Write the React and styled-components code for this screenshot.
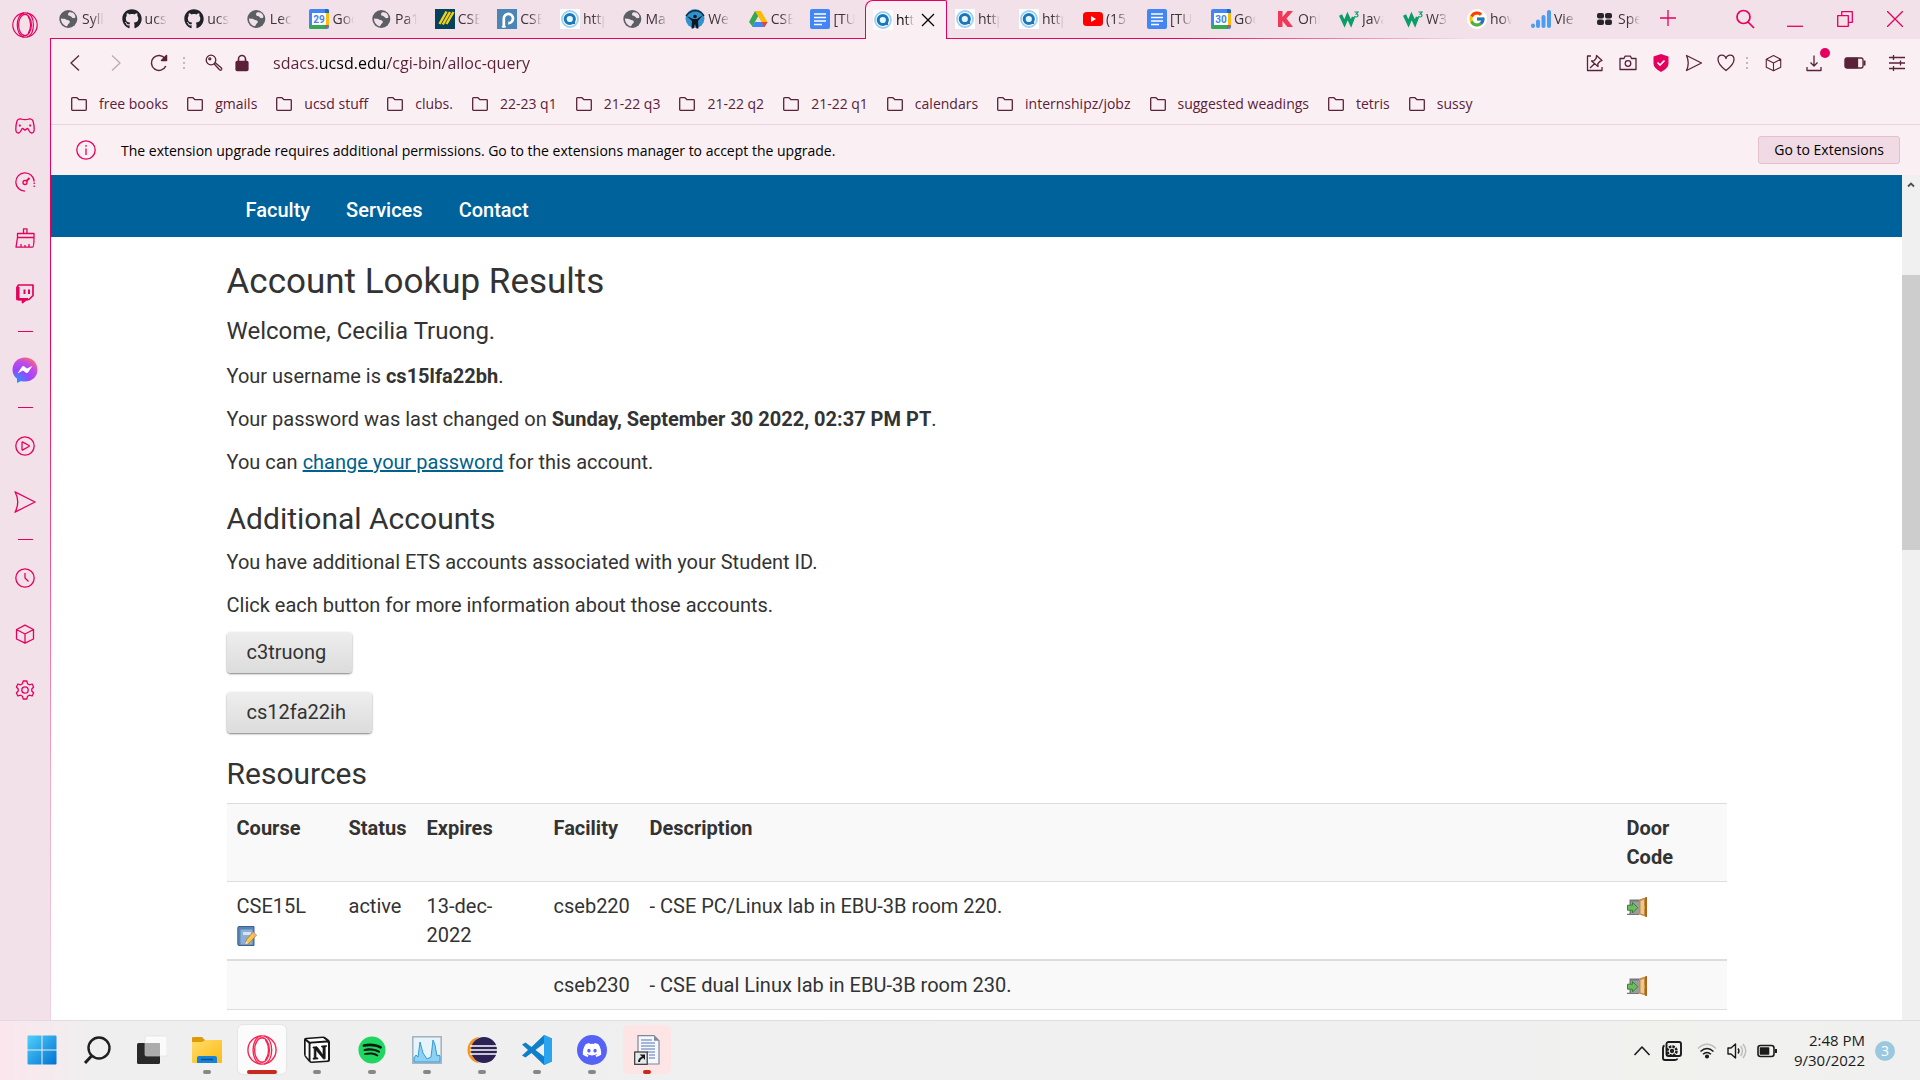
import React from "react";
import styled, { createGlobalStyle, css } from "styled-components";
import { FaGithub, FaDiscord, FaSpotify } from "react-icons/fa";
import { FcGoogle } from "react-icons/fc";

const pink = "#e6005e";
const plum = "#5a2139";
const uiFont = '"Open Sans", "Noto Sans", sans-serif';

const GlobalStyle = createGlobalStyle`
  *, *::before, *::after { box-sizing: border-box; }
  body { margin: 0; background: #fff; font-family: ${uiFont}; }
  svg { display: block; flex: none; }
  button, input { font: inherit; }
  button { border: 0; padding: 0; background: none; color: inherit; }
`;

/* ---------- frame ---------- */
const Desktop = styled.div`
  height: 100vh;
  display: flex;
  flex-direction: column;
  overflow: hidden;
`;
const Browser = styled.div`
  flex: 1;
  min-height: 0;
  display: flex;
  background: #f3e1e9;
`;
const Side = styled.aside`
  width: 50px;
  flex: none;
  display: flex;
  flex-direction: column;
  align-items: center;
  color: ${pink};
`;
const SideLogo = styled.button`
  height: 98px;
  width: 50px;
  padding-top: 12px;
  display: flex;
  justify-content: center;
  align-items: flex-start;
`;
const SideButton = styled.button`
  height: 56px;
  width: 48px;
  display: grid;
  place-items: center;
`;
const SideRule = styled.hr`
  width: 15px;
  height: 1px;
  border: 0;
  margin: 9px 0 10px;
  background: ${pink};
`;
const Column = styled.div`
  flex: 1;
  min-width: 0;
  display: flex;
  flex-direction: column;
`;

/* ---------- tabs ---------- */
const TabBar = styled.header`
  height: 39px;
  flex: none;
  display: flex;
  background: linear-gradient(to right, ${pink} 60%, rgba(230, 0, 94, 0) 76%) 0 100% / 100% 1px no-repeat, #f3e1e9;
`;
const TabList = styled.div`
  flex: 1;
  min-width: 0;
  display: grid;
  grid-template-columns: repeat(13, minmax(0, 1fr)) 82px repeat(11, 64px);
  padding: 0 1px;
`;
const Tab = styled.button`
  display: flex;
  align-items: center;
  gap: 3px;
  padding: 0 0 1px 8px;
  color: #3a3338;
  ${(p) =>
    p.$active &&
    css`
      background: #faf0f4;
      border: 1px solid ${pink};
      border-bottom: 0;
      border-radius: 8px 2px 0 0;
      color: #000;
      padding-left: 7px;
    `}
`;
const TabTitle = styled.span`
  flex: none;
  width: ${(p) => (p.$active ? 18 : 22)}px;
  margin-right: ${(p) => (p.$active ? 4 : 0)}px;
  overflow: hidden;
  white-space: nowrap;
  text-align: left;
  font-size: 14px;
  line-height: 20px;
  mask-image: linear-gradient(to right, #000 45%, transparent);
`;
const WindowTools = styled.div`
  width: 268px;
  flex: none;
  display: flex;
  color: ${pink};
`;
const NewTab = styled.button`
  width: 68px;
  height: 38px;
  padding: 0 0 2px 8px;
  display: flex;
  align-items: center;
`;
const WindowButton = styled.button`
  width: 50px;
  height: 38px;
  display: grid;
  place-items: center;
`;

/* ---------- toolbars ---------- */
const Chrome = styled.div`
  flex: 1;
  min-height: 0;
  display: flex;
  flex-direction: column;
  background: linear-gradient(to bottom, ${pink}, ${pink} 30%, #f0a8c6 75%, #efd3e0) 0 0 / 1px 100% no-repeat, #faf0f4;
  padding-left: 1px;
`;
const AddressBar = styled.div`
  height: 46px;
  flex: none;
  display: flex;
  align-items: center;
  padding: 2px 2px 0 9px;
  color: ${plum};
`;
const ToolButton = styled.button`
  width: ${(p) => p.$w || 33}px;
  height: 32px;
  flex: none;
  display: grid;
  place-items: center;
  opacity: ${(p) => (p.disabled ? 0.35 : 1)};
  position: relative;
  color: inherit;
`;
const Dot = styled.span`
  position: absolute;
  right: 4px;
  top: 1px;
  width: 10px;
  height: 10px;
  border-radius: 50%;
  background: ${pink};
`;
const Url = styled.input`
  flex: 1;
  min-width: 0;
  height: 32px;
  margin-left: 26px;
  border: 0;
  padding: 0;
  outline: 0;
  font-size: 16px;
  background: linear-gradient(to right, ${plum} 46px, #000 46px, #000 113px, ${plum} 113px);
  background-clip: text;
  -webkit-text-fill-color: transparent;
`;
const Bookmarks = styled.nav`
  height: 40px;
  flex: none;
  display: flex;
  align-items: center;
  gap: 19px;
  padding: 0 0 2px 20px;
  border-bottom: 1px solid #ecd2dd;
`;
const Bookmark = styled.a`
  display: flex;
  align-items: center;
  gap: 12px;
  font-size: 14px;
  line-height: 20px;
  color: ${plum};
  text-decoration: none;
  white-space: nowrap;
`;
const Notice = styled.div`
  height: 50px;
  flex: none;
  display: flex;
  align-items: center;
  padding: 0 20px 0 25px;
  font-size: 14px;
  color: #000;
`;
const NoticeText = styled.span`
  flex: 1;
  padding: 2px 0 0 25px;
  line-height: 20px;
`;
const NoticeButton = styled.button`
  height: 28px;
  padding: 0 15px 1px;
  background: #f0dae3;
  border: 1px solid #e3bfcf;
  border-radius: 3px;
`;

/* ---------- web page ---------- */
const Viewport = styled.div`
  flex: 1;
  min-height: 0;
  display: flex;
  background: #fff;
`;
const Page = styled.div`
  flex: 1;
  min-width: 0;
  overflow: hidden;
  background: #fff;
  color: #333;
  font-family: Roboto, sans-serif;
  font-size: 20px;
  line-height: 29px;
`;
const Container = styled.div`
  max-width: 1500px;
  margin: 0 auto;
`;
const SiteNav = styled.nav`
  background: #00629b;
`;
const NavLinks = styled(Container)`
  height: 62px;
  display: flex;
  align-items: center;
  gap: 36px;
  padding: 8px 19px 0;
`;
const NavLink = styled.a`
  color: #fff;
  font-weight: 500;
  text-decoration: none;
`;
const Title = styled.h1`
  margin: 0;
  padding-top: 23px;
  font-size: 35px;
  line-height: 44px;
  font-weight: 400;
`;
const Welcome = styled.h3`
  margin: 11px 0 15px;
  font-size: 24px;
  line-height: 32px;
  font-weight: 400;
`;
const Heading = styled.h2`
  margin: ${(p) => p.$top}px 0 11px;
  font-size: 30px;
  line-height: 36px;
  font-weight: 400;
`;
const Text = styled.p`
  margin: 0 0 ${(p) => (p.$tight ? 12 : 14)}px;
`;
const TextLink = styled.a`
  color: #00628a;
`;
const AccountButton = styled.button`
  display: block;
  height: 41px;
  margin-bottom: 19px;
  padding: 0 26px 0 20px;
  border-radius: 4px;
  background: linear-gradient(#eee, #dcdcdc);
  box-shadow: 0 1px 2px rgba(0, 0, 0, 0.5);
`;
const Table = styled.table`
  width: 100%;
  table-layout: fixed;
  border-collapse: collapse;
  border-bottom: 1px solid #ddd;
`;
const Col = styled.col`
  width: ${(p) => (p.$w ? `${p.$w}px` : "auto")};
`;
const Row = styled.tr`
  background: ${(p) => (p.$shade ? "#f9f9f9" : "#fff")};
  border-top: ${(p) => (p.$thick ? 2 : 1)}px solid #ddd;
`;
const Cell = styled.td`
  padding: 10px 10px 9px;
  vertical-align: top;
  text-align: left;
`;
const HeadCell = styled(Cell)`
  font-weight: 700;
`;
const IconLine = styled.a`
  height: 29px;
  display: flex;
  align-items: center;
`;
const Scrollbar = styled.div`
  width: 18px;
  flex: none;
  background: #f0f0f0;
  display: flex;
  flex-direction: column;
  align-items: center;
  padding-top: 5px;
`;
const Thumb = styled.div`
  width: 18px;
  height: 275px;
  margin-top: 85px;
  background: #cdcdcd;
`;

/* ---------- taskbar ---------- */
const Taskbar = styled.footer`
  height: 60px;
  flex: none;
  display: flex;
  justify-content: space-between;
  border-top: 1px solid #dedede;
  background: linear-gradient(to right, #fbe6ee, #f0efef 90px, #f0f0f0 1500px, #f1f1ee 1650px, #f0f0f0);
`;
const Apps = styled.div`
  display: flex;
  gap: 7px;
  padding: 4px 0 0 18px;
`;
const AppButton = styled.button`
  position: relative;
  width: 48px;
  height: 49px;
  display: grid;
  place-items: center;
  border-radius: 5px;
  background: ${(p) => (p.$tone === "open" ? "#fbfbfb" : p.$tone === "alert" ? "#fde5e6" : "none")};
  box-shadow: ${(p) => (p.$tone === "open" ? "0 0 1px 1px #e5e5e5" : "none")};
`;
const Running = styled.span`
  position: absolute;
  bottom: 0;
  left: 50%;
  transform: translateX(-50%);
  width: ${(p) => (p.$tone === "open" ? 30 : 8)}px;
  height: 4px;
  border-radius: 2px;
  background: ${(p) => (p.$tone ? "#c42b1c" : "#878787")};
`;
const Tray = styled.div`
  display: flex;
  align-items: center;
  padding-right: 25px;
  color: #1b1b1b;
`;
const TrayIcon = styled.button`
  width: ${(p) => p.$w || 30}px;
  display: grid;
  place-items: center;
`;
const Clock = styled.div`
  width: 83px;
  padding-bottom: 2px;
  text-align: right;
  font-size: 15px;
  line-height: 20px;
  white-space: nowrap;
`;
const Badge = styled.span`
  width: 20px;
  height: 20px;
  margin-left: 10px;
  border-radius: 50%;
  background: #99c8df;
  color: #fff;
  font-size: 14px;
  line-height: 20px;
  text-align: center;
`;

/* ---------- drawings ---------- */
const Line = ({ s = 20, w, h, sw = 1.3, vb, children }) => (
  <svg width={w || s} height={h || s} viewBox={vb || `0 0 ${w || s} ${h || s}`} fill="none" stroke="currentColor" strokeWidth={sw} strokeLinejoin="round" aria-hidden="true">
    {children}
  </svg>
);
const Opera = ({ w = 26, h = 26, c = "currentColor", sw = 1.2 }) => (
  <svg width={w} height={h} viewBox="0 0 26 26" fill="none" stroke={c} strokeWidth={sw}>
    <ellipse cx="13" cy="13" rx="12.2" ry="12.2" />
    <ellipse cx="13" cy="13" rx="6.4" ry="10.6" />
    <path d="M12 .8C3 3 3 23 12 25.200" />
    <path d="M15 .8C23.500 4 23.500 22 15 25.200" />
    <path d="M16 4.500C19.500 9 19.500 17 16 21.500" />
  </svg>
);
const CubePaths = () => <path d="M10 1.2L18.5 5.5V15L10 19.2L1.5 15V5.5zM1.5 5.5L10 10L18.5 5.5M10 10V19.2" />;
const Globe = () => (
  <svg width="20" height="20" viewBox="0 0 20 20">
    <circle cx="9.3" cy="10" r="9" fill="#5b5f63" />
    <path d="M10 3.500c2-.6 4.200 0 5.700 2.200.9 1.600 1 3-.2 3.300-1.600.5-2.500-.2-3.200-1.200-.8-1-2-.3-2.800-1.200-.7-.9-.5-2.700.5-3.100zM2 9.600c2 .2 3.200-.3 5 .8 1.800 1 3.200.6 3.800 2 .4 1.300-1.100 2-1.700 2.900-.5.900-.6 2-1.800 1.900C4.300 16.300 1.800 13 2 9.600z" fill="#f3e1e9" />
  </svg>
);
const Calendar = ({ n }) => (
  <svg width="20" height="20" viewBox="0 0 20 20">
    <rect width="20" height="20" rx="2" fill="#4285f4" />
    <path d="M16 4h4v12h-4z" fill="#fbbc04" />
    <path d="M0 16h16v4H2a2 2 0 0 1-2-2z" fill="#34a853" />
    <path d="M16 16h4l-4 4z" fill="#ea4335" />
    <path d="M16 0h2a2 2 0 0 1 2 2v2h-4z" fill="#1967d2" />
    <rect x="3" y="4" width="14" height="12" fill="#fff" />
    <text x="10" y="13.500" fontSize="10" fontWeight="700" fontFamily="Roboto, sans-serif" textAnchor="middle" fill="#4285f4">{n}</text>
  </svg>
);
const Stripes = () => (
  <svg width="20" height="20" viewBox="0 0 20 20">
    <rect width="20" height="20" fill="#06425c" />
    <path d="M4.500 15L11.500 2.500M7.800 15.500L15 3M11.500 15L18.500 3" stroke="#f5d20f" strokeWidth="2.400" />
  </svg>
);
const Piazza = () => (
  <svg width="20" height="20" viewBox="0 0 20 20">
    <rect width="20" height="20" fill="#4a86b5" />
    <path d="M6.800 18.500V9.500a4.600 4.600 0 1 1 4.400 4.600" fill="none" stroke="#fff" strokeWidth="2.700" />
    <path d="M4.800 17.700h4" stroke="#fff" strokeWidth="1.500" />
  </svg>
);
const Swirl = () => (
  <svg width="20" height="20" viewBox="0 0 20 20">
    <rect width="20" height="20" fill="#fdfeff" />
    <circle cx="10" cy="10" r="8" fill="none" stroke="#9fd0ee" strokeWidth="1.800" />
    <circle cx="9.800" cy="10" r="4.600" fill="#e8f6ff" stroke="#1878bd" strokeWidth="3" />
    <path d="M14 7v8" stroke="#1878bd" strokeWidth="2" />
  </svg>
);
const Figure = () => (
  <svg width="20" height="20" viewBox="0 0 20 20">
    <circle cx="10" cy="9.500" r="9.500" fill="#2e93d0" />
    <path d="M1 7c5-7 14-7 18 0" stroke="#182a3a" strokeWidth="1.500" fill="none" />
    <path d="M2 7l6 3h4l6-4-5 6 .5 7.500h-2L10 15l-1.500 4.500h-2L7 12z" fill="#11151c" />
    <circle cx="10" cy="7.500" r="1.800" fill="#11151c" />
  </svg>
);
const Drive = () => (
  <svg width="20" height="20" viewBox="0 0 20 20">
    <path d="M7 2h6l-3 5.500L4.500 17.500 1 13z" fill="#34a853" />
    <path d="M7 2h6l6.500 11h-6z" fill="#fbbc04" />
    <path d="M7 13h12.500L16.500 18H4z" fill="#4285f4" />
    <path d="M13.500 13h6L16.500 18z" fill="#ea4335" />
  </svg>
);
const Doc = () => (
  <svg width="20" height="20" viewBox="0 0 20 20">
    <rect width="20" height="20" rx="2" fill="#4285f4" />
    <path d="M4 5h12M4 8.500h12M4 12h12M4 15.500h8" stroke="#fff" strokeWidth="1.700" />
  </svg>
);
const YouTube = () => (
  <svg width="20" height="20" viewBox="0 0 20 20">
    <rect y="3" width="20" height="14" rx="3.500" fill="#f00" />
    <path d="M8 7l5 3-5 3z" fill="#fff" />
  </svg>
);
const Kmark = () => (
  <svg width="20" height="20" viewBox="0 0 20 20">
    <path d="M3 2h4.500v6l5-6H18l-6.500 7.500L18 18h-5.500L7.500 12v6H3z" fill="#ee3a57" />
  </svg>
);
const Wmark = () => (
  <svg width="20" height="20" viewBox="0 0 20 20">
    <path d="M1.500 6l4 8.500 3-7.500 3.500 7.500L14.500 8" fill="none" stroke="#0a9d68" strokeWidth="3.400" />
    <path d="M15.500 3H19l-1.700 2c2.300 0 2.300 3-.1 3-.9 0-1.500-.3-1.900-.9" fill="none" stroke="#0a9d68" strokeWidth="1.200" />
  </svg>
);
const GMark = () => (
  <svg width="20" height="20" viewBox="0 0 20 20">
    <circle cx="10" cy="10" r="10" fill="#fff" />
    <FcGoogle x="1" y="1" size={18} />
  </svg>
);
const Bars = () => (
  <svg width="20" height="20" viewBox="0 0 20 20" stroke="#4a9cf5" strokeWidth="4" strokeLinecap="round">
    <path d="M2 16.500v.5M7 12.500v4.500M12.500 8v9M18 3v14" />
  </svg>
);
const Squares = () => (
  <svg width="20" height="20" viewBox="0 0 20 20" fill="#26262a">
    <rect x="2" y="4" width="7" height="5.500" rx="2" /><rect x="10" y="4" width="7" height="5.500" rx="2" />
    <rect x="2" y="10.500" width="7" height="5.500" rx="2" /><rect x="10" y="10.500" width="7" height="5.500" rx="2" />
  </svg>
);
const Folder = () => (
  <Line w={16} h={14}><path d="M.7 1.500Q.7.700 1.500.700H6L8 2.700h6.500q.8 0 .8.800v9q0 .8-.8.800h-13q-.8 0-.8-.8z" /></Line>
);
const Dots = () => (
  <svg width="2" height="14" fill="#d3b0be"><path d="M0 1h2v2H0zM0 6h2v2H0zM0 11h2v2H0z" /></svg>
);
const Door = () => (
  <svg width="20" height="20" viewBox="0 0 20 20">
    <path d="M2.500 2.500H12V18H0v-1.200h2.500z" fill="#77777a" />
    <path d="M4 4.500h8V17H4z" fill="#9c9c9f" />
    <path d="M12 2.500L20 0v20l-8-2.500z" fill="#c98a45" />
    <path d="M13.500 4L17 2.800v14.700L13.500 16.500z" fill="#ecc994" />
    <path d="M18 .8L20 0v20l-2-.6z" fill="#a9661d" />
    <circle cx="16.800" cy="10.500" r="1.100" fill="#f8c81c" />
    <path d="M.5 8.200h5V5.500L10.800 10.700 5.500 16v-2.800h-5z" fill="#6dbb5c" stroke="#35843a" />
  </svg>
);
const Notebook = () => (
  <svg width="20" height="20" viewBox="0 0 20 20">
    <path d="M2 .5h15v19H2q-1.200 0-1.200-1.200V1.700Q.8.500 2 .5z" fill="#5a84b2" stroke="#3c638f" />
    <path d="M3.500 3.500h12v15h-12z" fill="#8bb0d8" />
    <path d="M6 6h8v3H6z" fill="#d4e4f5" />
    <path d="M8 18.500l1.500-5L16 6l3.500 3-7 8z" fill="#f5c84c" stroke="#a97524" strokeWidth=".8" />
    <path d="M8 18.500l1.200-3.500 2.200 2.200z" fill="#f7e3c8" />
    <path d="M16 6l3.500 3-1.200 1.500-3.500-3z" fill="#f1a59b" />
  </svg>
);
const Messenger = () => (
  <svg width="26" height="26" viewBox="0 0 26 26">
    <defs>
      <radialGradient id="msg" cx="20%" cy="98%" r="110%">
        <stop offset="0" stopColor="#1a9bff" /><stop offset=".45" stopColor="#9a45ff" /><stop offset=".75" stopColor="#c04be6" /><stop offset="1" stopColor="#ff6a70" />
      </radialGradient>
    </defs>
    <path d="M13 .5C5.800.500.500 5.800.500 12.700c0 3.700 1.700 6.900 4.500 9V26l4.100-2c1.200.4 2.500.5 3.900.5 7.200 0 12.500-5 12.500-11.800S20.200.500 13 .5z" fill="url(#msg)" />
    <path d="M5.500 16.500L10 9.800q1-1.300 2.400-.4L15 11.500l5.500-2.700-4.300 6.500q-1 1.200-2.300.4L11 13.500z" fill="#fff" />
  </svg>
);

/* taskbar drawings */
const Windows = () => (
  <svg width="30" height="30" viewBox="0 0 30 30">
    <defs><linearGradient id="win" x1="0" y1="0" x2="1" y2="1"><stop offset="0" stopColor="#4fd0fb" /><stop offset="1" stopColor="#0272d2" /></linearGradient></defs>
    <path d="M1.500.5H14.500V14.500H.5V1.500q0-1 1-1zM15.500.5h13q1 0 1 1v13h-14zM.5 15.500h14v14h-13q-1 0-1-1zM15.500 15.500h14v13q0 1-1 1h-13z" fill="url(#win)" />
  </svg>
);
const Search = () => (
  <svg width="28" height="28" viewBox="0 0 28 28" fill="none" stroke="#1f1f1f">
    <circle cx="16" cy="12" r="10.500" strokeWidth="2.400" /><path d="M8.500 20L2 27" strokeWidth="3" />
  </svg>
);
const TaskView = () => (
  <svg width="30" height="30" viewBox="0 0 30 30">
    <rect x="0" y="8" width="23" height="21" rx="1.500" fill="#292929" />
    <rect x="8" y="1" width="22" height="20" rx="1.500" fill="#fff" fillOpacity=".75" stroke="#ddd" strokeWidth=".6" />
    <path d="M8 8h15v13H8z" fill="#9f9f9f" fillOpacity=".7" />
  </svg>
);
const Explorer = () => (
  <svg width="30" height="28" viewBox="0 0 30 28">
    <defs><linearGradient id="fold" x1="0" y1="0" x2="1" y2="1"><stop offset="0" stopColor="#ffdc6e" /><stop offset="1" stopColor="#fdbb0e" /></linearGradient></defs>
    <path d="M0 2Q0 1 1 1h9l3 3h16q1 0 1 1v6H0z" fill="#dd9b06" />
    <path d="M0 6h10l3-2h16q1 0 1 1v21q0 1-1 1H1q-1 0-1-1z" fill="url(#fold)" />
    <path d="M5 27v-5q0-2 2-2h16q2 0 2 2v5z" fill="#1683d8" />
    <path d="M9 23.500h12" stroke="#0b4f8c" strokeWidth="1.500" />
  </svg>
);
const Notion = () => (
  <svg width="28" height="28" viewBox="0 0 28 28">
    <path d="M1 3.500Q1 2 3 1.800L20 .6q1.500 0 2.500.7L26 4q1 .8 1 2v18q0 1.800-2 2L9 27q-2 0-3-1.200L2 21q-1-1.300-1-3z" fill="#171717" />
    <path d="M3.500 3.200L20 2l3.500 2.500L7 5.800z" fill="#fff" /><path d="M2.700 5L5.600 7.500V23L2.700 19.500z" fill="#fff" />
    <path d="M7.500 8.500q0-1 1-1L24 6.500q1 0 1 1V23.500q0 1-1 1L8.500 25.400q-1 0-1-1z" fill="#fff" />
    <path d="M10 11l4-.3L20 19v-7.500l-1.500-.6V10l5-.4v.9l-1.300.8v11.500l-1.700.3L13 14v7.500l2 .6v.8l-5 .3v-.9l1.200-.6V12.300L10 12z" fill="#171717" stroke="#171717" strokeWidth=".7" />
  </svg>
);
const Monitor = () => (
  <svg width="30" height="28" viewBox="0 0 30 28">
    <rect x=".8" y=".8" width="28.400" height="26.400" fill="#e8f4fb" stroke="#a2b1bc" strokeWidth="1.500" />
    <path d="M2 22l2-3 2 2 2-15 3 11 2 3 2 3 4-2 2-17 2 5 2 11 2-1 1 1v6H2z" fill="#8fd0f3" stroke="#2493d6" strokeWidth=".9" />
  </svg>
);
const Eclipse = () => (
  <svg width="30" height="28" viewBox="0 0 30 28">
    <path d="M13 .7C5 1.500.500 7.500.500 14S5 26.500 13 27.300C7 24 4.500 19 4.500 14S7 4 13 .7z" fill="#f7941e" />
    <circle cx="17" cy="14" r="13" fill="#2c2255" />
    <path d="M3 10h27M3 14h27M3 18h27" stroke="#fff" strokeWidth="1.700" />
  </svg>
);
const VSCode = () => (
  <svg width="30" height="30" viewBox="0 0 30 30">
    <path d="M22 0L30 3.500v23L22 30 9.500 18 3.500 22.500 0 20.500 6 15 0 9.500l3.500-2L9.500 12z M22 8.500L13.500 15 22 21.500z" fill="#0f7fcb" fillRule="evenodd" />
    <path d="M22 0l8 3.500v23L22 30z" fill="#2ba4ef" />
  </svg>
);
const DiscordMark = () => (
  <svg width="30" height="30" viewBox="0 0 30 30"><circle cx="15" cy="15" r="15" fill="#5662f6" /><FaDiscord x="5" y="5" size={20} color="#fff" /></svg>
);
const SpotifyMark = () => (
  <svg width="28" height="28" viewBox="0 0 28 28"><circle cx="14" cy="14" r="12" fill="#0d1a10" /><FaSpotify size={28} color="#1ed760" /></svg>
);
const NoteFile = () => (
  <svg width="26" height="30" viewBox="0 0 26 30">
    <path d="M4 .7h16l5 5V29H4z" fill="#f5f9ff" stroke="#7e8793" strokeWidth="1.200" />
    <path d="M20 .7v5h5z" fill="#7d8ca3" />
    <path d="M7 5h11M7 8h14M7 11h14M7 14h14M13 17h8M15 20h6M15 23h6" stroke="#5776b1" strokeWidth="1.200" />
    <rect x=".7" y="17" width="12.500" height="12.300" fill="#e6e9ed" stroke="#333" strokeWidth="1.200" />
    <path d="M4 27q0-4 4-5.500L5.500 19.500H11v5.500L9.300 23Q6 24.500 6 27z" fill="#1a1a1a" />
  </svg>
);

const tabs = [
  [Globe, "Sylla"], ["gh", "ucs"], ["gh", "ucs"], [Globe, "Lec"], ["29", "Goo"], [Globe, "Pa1"],
  [Stripes, "CSE"], [Piazza, "CSE"], [Swirl, "http"], [Globe, "Ma"], [Figure, "We"], [Drive, "CSE"], [Doc, "[TU"],
  [Swirl, "http"], [Swirl, "http"], [Swirl, "http"], [YouTube, "(15"], [Doc, "[TU"], ["30", "Goo"], [Kmark, "Onl"],
  [Wmark, "Java"], [Wmark, "W3"], [GMark, "how"], [Bars, "Vie"], [Squares, "Spe"],
];
const TabIcon = ({ kind: Kind }) => {
  if (Kind === "gh") return <FaGithub size={20} color="#1f2328" />;
  if (typeof Kind === "string") return <Calendar n={Kind} />;
  return <Kind />;
};
const bookmarks = ["free books", "gmails", "ucsd stuff", "clubs.", "22-23 q1", "21-22 q3", "21-22 q2", "21-22 q1", "calendars", "internshipz/jobz", "suggested weadings", "tetris", "sussy"];

const Sidebar = () => (
  <Side>
    <SideLogo aria-label="Opera menu"><Opera /></SideLogo>
    <SideButton aria-label="GX Corner"><Line w={20} h={16}><path d="M6 1Q10 2.300 14 1q3-.8 4 2 1.200 4 1.200 8 0 4-2.500 4-1.500 0-2.500-2l-1-2q-.6-1-1.700 0-1.500 2-3 0-1.100-1-1.700 0l-1 2q-1 2-2.500 2-2.500 0-2.500-4 0-4 1.200-8 1-2.800 4-2z" /><path d="M3.800 7.500h2M14.200 7.500h2M4.800 6.500v2M15.200 6.500v2" /></Line></SideButton>
    <SideButton aria-label="GX Control"><Line><path d="M10 19.200A9.200 9.200 0 1 1 19.200 9.500" /><path d="M19.200 10.500v4.500" strokeDasharray="1.500 1.500" /><circle cx="10" cy="10.500" r="2" /><path d="M11.500 9L14.500 6" strokeWidth="1.800" /></Line></SideButton>
    <SideButton aria-label="GX Cleaner"><Line><path d="M8.500 5.500V.8h3.500v4.700M2.500 5.500h16.500v4H2.500zM2.500 9.500L1 19.200h16.500q1.500 0 1.500-9.700M6 19v-3M10 19v-2M14 19v-3" /></Line></SideButton>
    <SideButton aria-label="Twitch"><Line w={18} h={20} sw={1.700}><path d="M2.500 1H17v10.500L13 15.500H10L6.500 18.500V15.500H1V3.500z" /><path d="M2 3v12" strokeWidth="3" /><path d="M2 15.300h10M6.500 17.500l3-2" strokeWidth="2.500" /><path d="M8.500 5.500v4.500M13 5.500v4.500" strokeWidth="2" /></Line></SideButton>
    <SideRule />
    <SideButton aria-label="Messenger"><Messenger /></SideButton>
    <SideRule />
    <SideButton aria-label="Player"><Line><circle cx="10" cy="10" r="9.200" /><path d="M7 6.500q0-.8.800-.4L14 9.500q.8.500 0 1L7.800 13.900q-.8.400-.8-.4z" /></Line></SideButton>
    <SideButton aria-label="My Flow"><Line w={22} h={22}><path d="M1 .8L21 11 1 21.200Q6.500 11 1 .8z" /></Line></SideButton>
    <SideRule />
    <SideButton aria-label="History"><Line><circle cx="10" cy="10" r="9.200" /><path d="M10 5v5l3.500 3.500" /></Line></SideButton>
    <SideButton aria-label="Extensions"><Line><CubePaths /></Line></SideButton>
    <SideButton aria-label="Settings"><Line><circle cx="10" cy="10" r="3.200" /><path d="M8.200 1h3.600l.7 2.700 2 1.100 2.600-.8 1.500 3-1.800 2v2l1.800 2-1.500 3-2.600-.8-2 1.100-.7 2.700H8.200l-.7-2.700-2-1.100-2.600.8-1.500-3 1.800-2V9L1.400 7l1.500-3 2.600.8 2-1.100z" /></Line></SideButton>
  </Side>
);

const Toolbar = () => (
  <AddressBar>
    <ToolButton $w={30} aria-label="Back"><Line w={12} h={18}><path d="M10 1.500L2 9l8 7.500" /></Line></ToolButton>
    <ToolButton $w={52} aria-label="Forward" disabled><Line w={12} h={18}><path d="M2 1.500L10 9l-8 7.500" /></Line></ToolButton>
    <ToolButton $w={33} aria-label="Reload"><Line w={18} h={18} sw={1.500}><path d="M15.800 12A7.500 7.500 0 1 1 15 4.500" /><path d="M16.500 1.500v5h-5z" fill="currentColor" /></Line></ToolButton>
    <ToolButton $w={18} aria-label="More"><Dots /></ToolButton>
    <ToolButton $w={42} aria-label="Passwords"><Line w={18} h={18}><circle cx="6" cy="6" r="4.800" /><circle cx="4.800" cy="4.800" r="1" /><path d="M9 9.800l5.500 6q1.500 1 2.200-.3.200-1-.5-1.800L10 8.500" /></Line></ToolButton>
    <ToolButton $w={12} aria-label="Site information"><Line w={14} h={18} sw={1.600}><path d="M3.500 8V5a3.500 3.500 0 0 1 7 0v3" /><rect x="1.200" y="7.500" width="11.600" height="9" rx="1" fill="currentColor" /></Line></ToolButton>
    <Url aria-label="Address" defaultValue="sdacs.ucsd.edu/cgi-bin/alloc-query" />
    <ToolButton aria-label="Snapshot note"><Line w={18} h={18}><path d="M5 2H1.500v14.500H16V13" /><path d="M10.500 1.500l5.500 5-2 .8-2.200 2.500.2 2.700L5.500 7l2.800-.3L10.300 4zM8.500 9.800L4 14" /></Line></ToolButton>
    <ToolButton aria-label="Snapshot"><Line w={18} h={18}><path d="M1 4.500h4l1-2.300h5.500l1 2.300H17V15.500H1z" /><circle cx="9" cy="9.500" r="2.800" /></Line></ToolButton>
    <ToolButton aria-label="Ad blocker"><svg width="16" height="18" viewBox="0 0 16 18"><path d="M8 0l7.500 2.500v7Q15.500 14 8 18 .5 14 .5 9.500v-7z" fill={pink} /><path d="M4.500 8.500L7 11l4.500-4.500" stroke="#fff" strokeWidth="1.600" fill="none" /></svg></ToolButton>
    <ToolButton aria-label="My Flow"><Line w={18} h={18}><path d="M1.500 1.500L16.500 9 1.500 16.500Q5 9 1.500 1.500z" /></Line></ToolButton>
    <ToolButton $w={32} aria-label="Favourite"><Line w={18} h={18}><path d="M9 16.500Q1 10.500 1 5.500 1 1.200 4.800 1.200 8 1.200 9 4.500 10 1.200 13.200 1.200 17 1.200 17 5.500 17 10.500 9 16.500z" /></Line></ToolButton>
    <ToolButton $w={10} aria-label="More extensions"><Dots /></ToolButton>
    <ToolButton $w={42} aria-label="Extensions"><Line w={17} h={18} vb="0 0 20 20"><CubePaths /></Line></ToolButton>
    <ToolButton $w={40} aria-label="Downloads"><Line w={16} h={18}><path d="M8 1.500v10M4.500 8.500L8 12l3.500-3.500M1 13v3.500h14V13" /></Line><Dot /></ToolButton>
    <ToolButton $w={42} aria-label="Battery saver"><Line w={22} h={12}><rect x="1" y="1" width="18" height="10" rx="2" /><path d="M1.500 1.500h12v9h-12z" fill="currentColor" /><path d="M20.500 3.500v5" strokeWidth="2" /></Line></ToolButton>
    <ToolButton $w={42} aria-label="Easy setup"><Line w={16} h={16}><path d="M0 2.500h16M0 8h16M0 13.500h16M4.500 0v5M11.500 5.500v5M4.500 11v5" /></Line></ToolButton>
  </AddressBar>
);

const apps = [
  { name: "Start", icon: <Windows /> },
  { name: "Search", icon: <Search /> },
  { name: "Task View", icon: <TaskView /> },
  { name: "File Explorer", icon: <Explorer />, run: true },
  { name: "Opera GX", icon: <Opera w={30} h={30} c="#fa2350" sw={1.2} />, run: true, tone: "open" },
  { name: "Notion", icon: <Notion />, run: true },
  { name: "Spotify", icon: <SpotifyMark />, run: true },
  { name: "Resource Monitor", icon: <Monitor />, run: true },
  { name: "Eclipse", icon: <Eclipse />, run: true },
  { name: "Visual Studio Code", icon: <VSCode />, run: true },
  { name: "Discord", icon: <DiscordMark />, run: true },
  { name: "Notepad", icon: <NoteFile />, run: true, tone: "alert" },
];

export default function App() {
  return (
    <Desktop>
      <GlobalStyle />
      <Browser>
        <Sidebar />
        <Column>
          <TabBar>
            <TabList>
              {tabs.map(([kind, title], i) => (
                <Tab key={i} $active={i === 13}>
                  <TabIcon kind={kind} />
                  <TabTitle $active={i === 13}>{title}</TabTitle>
                  {i === 13 && <Line w={14} h={14}><path d="M1 1l12 12M13 1L1 13" /></Line>}
                </Tab>
              ))}
            </TabList>
            <WindowTools>
              <NewTab aria-label="New tab"><Line w={16} h={16}><path d="M8 0v16M0 8h16" /></Line></NewTab>
              <WindowButton aria-label="Search tabs"><Line w={20} h={20} sw={1.700}><circle cx="8.500" cy="8" r="6.500" /><path d="M13 13l6 6" /></Line></WindowButton>
              <WindowButton aria-label="Minimize"><Line w={16} h={16}><path d="M0 15.300h16" /></Line></WindowButton>
              <WindowButton aria-label="Restore"><Line w={16} h={16}><path d="M.7 4.700h10.600v10.600H.7zM4.700 4.700V.7h10.600v10.600h-4" /></Line></WindowButton>
              <WindowButton aria-label="Close"><Line w={16} h={16}><path d="M0 0l16 16M16 0L0 16" /></Line></WindowButton>
            </WindowTools>
          </TabBar>
          <Chrome>
            <Toolbar />
            <Bookmarks>
              {bookmarks.map((b) => (
                <Bookmark key={b} href="#"><Folder />{b}</Bookmark>
              ))}
            </Bookmarks>
            <Notice>
              <Line><g color={pink} stroke={pink}><circle cx="10" cy="10" r="9.200" /><path d="M10 8.500V15M10 5v1.800" /></g></Line>
              <NoticeText>The extension upgrade requires additional permissions. Go to the extensions manager to accept the upgrade.</NoticeText>
              <NoticeButton>Go to Extensions</NoticeButton>
            </Notice>
            <Viewport>
              <Page>
                <SiteNav>
                  <NavLinks>
                    <NavLink href="#">Faculty</NavLink>
                    <NavLink href="#">Services</NavLink>
                    <NavLink href="#">Contact</NavLink>
                  </NavLinks>
                </SiteNav>
                <Container as="main">
                  <Title>Account Lookup Results</Title>
                  <Welcome>Welcome, Cecilia Truong.</Welcome>
                  <Text>Your username is <b>cs15lfa22bh</b>.</Text>
                  <Text>Your password was last changed on <b>Sunday, September 30 2022, 02:37 PM PT</b>.</Text>
                  <Text>You can <TextLink href="#">change your password</TextLink> for this account.</Text>
                  <Heading $top={24}>Additional Accounts</Heading>
                  <Text>You have additional ETS accounts associated with your Student ID.</Text>
                  <Text $tight>Click each button for more information about those accounts.</Text>
                  <AccountButton>c3truong</AccountButton>
                  <AccountButton>cs12fa22ih</AccountButton>
                  <Heading $top={23}>Resources</Heading>
                  <Table>
                    <colgroup><Col $w={112} /><Col $w={78} /><Col $w={127} /><Col $w={96} /><Col /><Col $w={110} /></colgroup>
                    <thead>
                      <Row $shade>
                        <HeadCell as="th">Course</HeadCell><HeadCell as="th">Status</HeadCell><HeadCell as="th">Expires</HeadCell>
                        <HeadCell as="th">Facility</HeadCell><HeadCell as="th">Description</HeadCell><HeadCell as="th">Door<br />Code</HeadCell>
                      </Row>
                    </thead>
                    <tbody>
                      <Row>
                        <Cell>CSE15L<IconLine href="#" aria-label="Course notes"><Notebook /></IconLine></Cell>
                        <Cell>active</Cell><Cell>13-dec-<br />2022</Cell><Cell>cseb220</Cell>
                        <Cell>- CSE PC/Linux lab in EBU-3B room 220.</Cell>
                        <Cell><IconLine href="#" aria-label="Door code for cseb220"><Door /></IconLine></Cell>
                      </Row>
                      <Row $shade $thick>
                        <Cell /><Cell /><Cell /><Cell>cseb230</Cell>
                        <Cell>- CSE dual Linux lab in EBU-3B room 230.</Cell>
                        <Cell><IconLine href="#" aria-label="Door code for cseb230"><Door /></IconLine></Cell>
                      </Row>
                    </tbody>
                  </Table>
                </Container>
              </Page>
              <Scrollbar>
                <svg width="8" height="10" viewBox="0 0 8 10"><path d="M1 6.500L4 3.500 7 6.500" fill="none" stroke="#505050" strokeWidth="1.800" /></svg>
                <Thumb />
              </Scrollbar>
            </Viewport>
          </Chrome>
        </Column>
      </Browser>
      <Taskbar>
        <Apps>
          {apps.map((a) => (
            <AppButton key={a.name} aria-label={a.name} $tone={a.tone}>
              {a.icon}
              {a.run && <Running $tone={a.tone} />}
            </AppButton>
          ))}
        </Apps>
        <Tray>
          <TrayIcon $w={20} aria-label="Hidden icons"><Line w={18} h={12} sw={1.600}><path d="M1.500 10L9 2l7.500 8" /></Line></TrayIcon>
          <TrayIcon $w={40} aria-label="Settings"><Line w={20} h={20} sw={1.900}><rect x="4.500" y="1" width="14.500" height="14" rx="2" /><path d="M2.500 4.500Q1 5 1 7v10q0 2 2 2h10q2 0 2.500-1.500" /><circle cx="10" cy="10" r="4.500" strokeWidth="2.500" strokeDasharray="2.500 1" /><circle cx="10" cy="10" r="1.200" /></Line></TrayIcon>
          <TrayIcon aria-label="Wi-Fi"><Line w={20} h={16} sw={1.500}><path d="M1 5.500Q10-3 19 5.500" stroke="#bbb" /><path d="M3.500 8.500q6.500-6 13 0M6 11.300q4-3.600 8 0" /><circle cx="10" cy="13.500" r="1.300" fill="currentColor" /></Line></TrayIcon>
          <TrayIcon aria-label="Volume"><Line w={20} h={18} sw={1.400}><path d="M1 6h3L8.500 2v14L4 12H1zM11 6.500q2 2.500 0 5" /><path d="M13.500 4q4 5 0 10M16 2q5.500 7 0 14" stroke="#bbb" /></Line></TrayIcon>
          <TrayIcon aria-label="Battery"><Line w={20} h={14} sw={1.600}><rect x="1" y="1.500" width="16" height="11" rx="2.500" /><path d="M3.500 4h8v6h-8z" fill="currentColor" /><path d="M19 5v4" strokeWidth="2" /></Line></TrayIcon>
          <Clock>2:48 PM<br />9/30/2022</Clock>
          <Badge>3</Badge>
        </Tray>
      </Taskbar>
    </Desktop>
  );
}
